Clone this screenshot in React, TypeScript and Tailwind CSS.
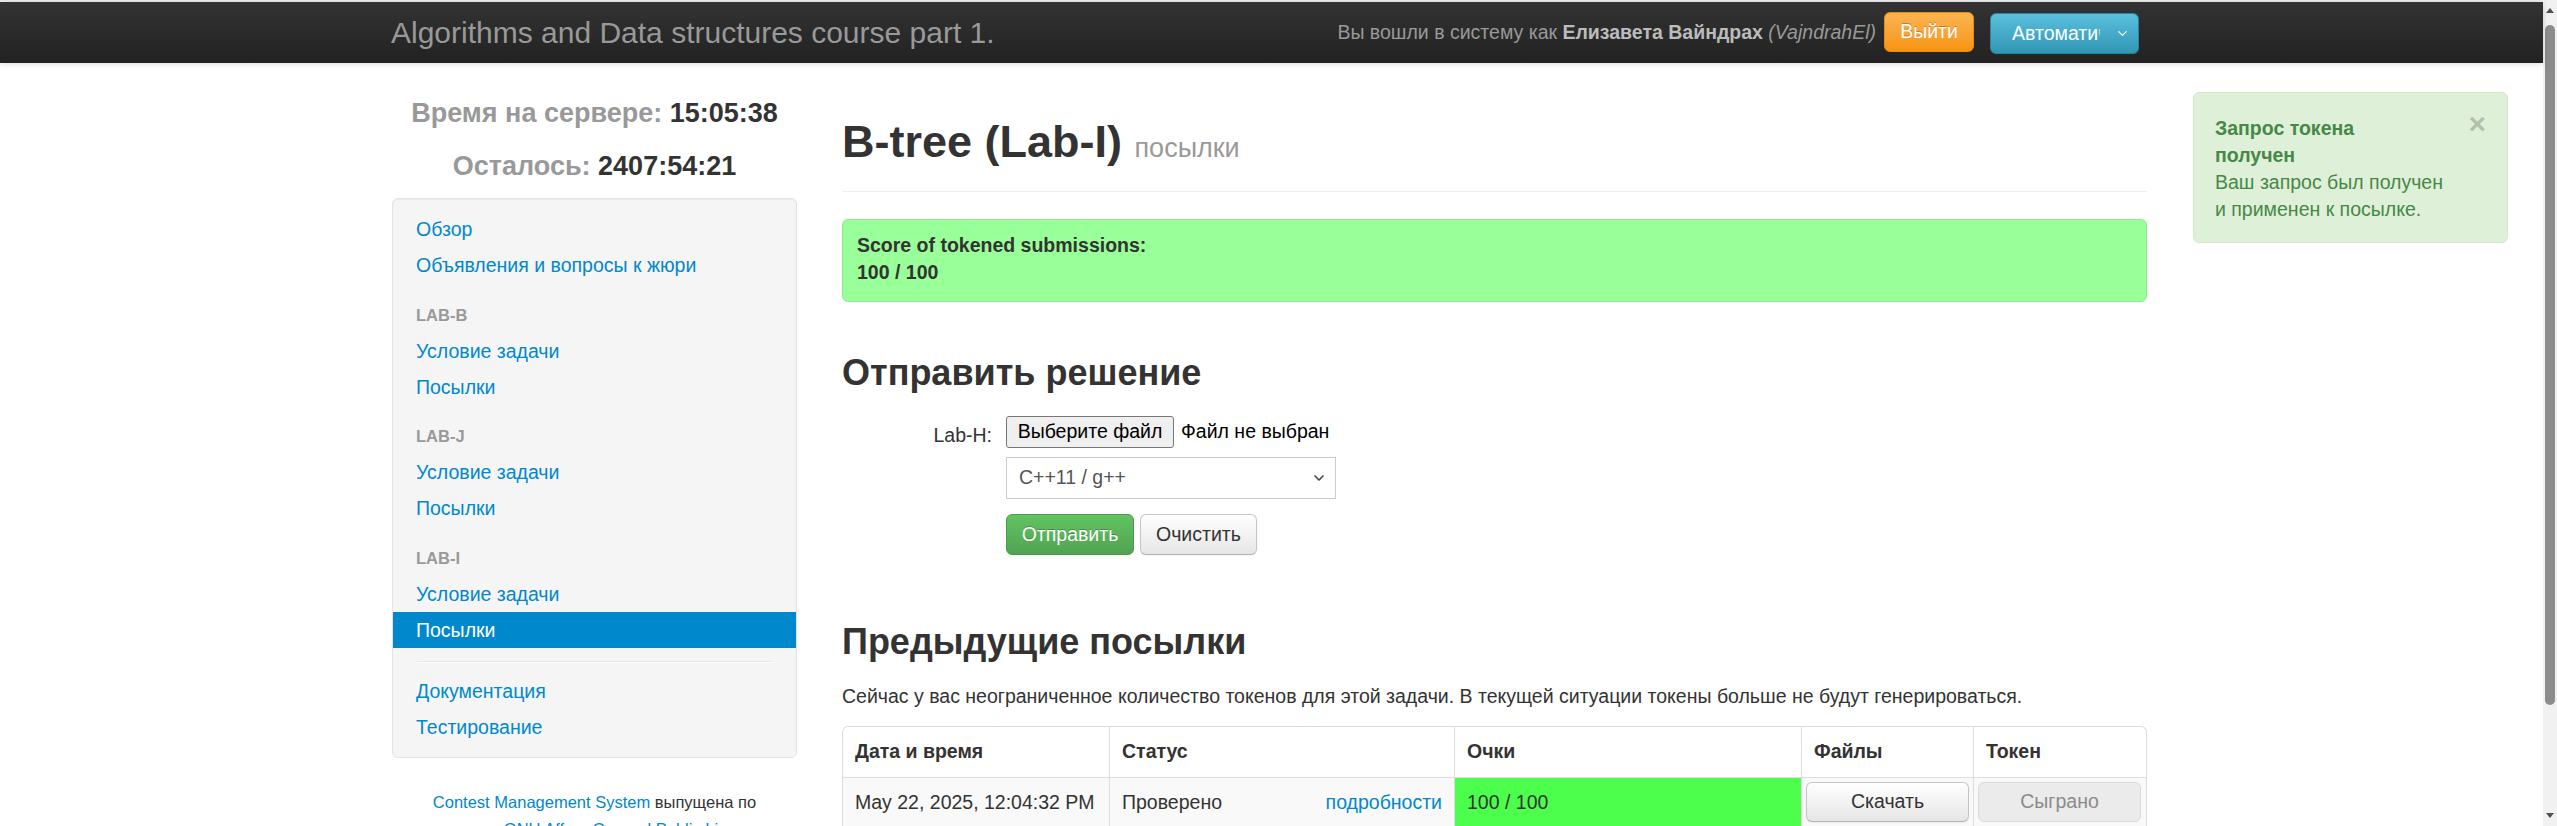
import React from "react";
import { ChevronDown } from "lucide-react";

const navLink = "block px-[23px] py-[3px] leading-[30px] text-[19.5px] text-[#0088cc]";
const navHeader = "mt-[13.5px] px-[23px] py-[3px] leading-[30px] text-[16.5px] font-bold uppercase text-[#999]";

const Sidebar = () => (
  <aside className="w-[405px] shrink-0 pt-[30px]">
    <div className="flex flex-col gap-[13px] text-center text-[27px] font-bold leading-[40px] text-[#333]">
      <div>
        <span className="text-[#999]">Время на сервере:</span> 15:05:38
      </div>
      <div>
        <span className="text-[#999]">Осталось:</span> 2407:54:21
      </div>
    </div>

    <div className="mt-[12px] rounded-[6px] border border-[#e3e3e3] bg-[#f5f5f5] py-[12px] shadow-[inset_0_1px_1px_rgba(0,0,0,0.05)]">
      <a className={navLink}>Обзор</a>
      <a className={navLink}>Объявления и вопросы к жюри</a>

      <div className={navHeader}>Lab-B</div>
      <a className={navLink}>Условие задачи</a>
      <a className={navLink}>Посылки</a>

      <div className={navHeader}>Lab-J</div>
      <a className={navLink}>Условие задачи</a>
      <a className={navLink}>Посылки</a>

      <div className={navHeader}>Lab-I</div>
      <a className={navLink}>Условие задачи</a>
      <a className="block bg-[#0088cc] px-[23px] py-[3px] leading-[30px] text-[19.5px] text-white">Посылки</a>

      <div className="mx-[24px] mb-[10px] mt-[13.5px] h-[2px] border-b border-white bg-[#e5e5e5]" />

      <a className={navLink}>Документация</a>
      <a className={navLink}>Тестирование</a>
    </div>

    <p className="mt-[31px] px-[20px] text-center text-[16.5px] leading-[27px] text-[#333]">
      <a className="text-[#0088cc]">Contest Management System</a> выпущена по
      <br />
      лицензии <a className="text-[#0088cc]">GNU Affero General Public License</a>
    </p>
  </aside>
);

const btnDefault =
  "flex items-center justify-center rounded-[6px] border border-[#c5c5c5] border-b-[#b3b3b3] bg-gradient-to-b from-white to-[#e6e6e6] text-[19.5px] text-[#333] shadow-[inset_0_1px_0_rgba(255,255,255,0.2),0_1px_2px_rgba(0,0,0,0.05)]";

const SubmitForm = () => (
  <div className="mt-[22px]">
    <div className="flex items-start">
      <label className="mt-[4px] w-[150px] text-right text-[19.5px] leading-[30px] text-[#333]">Lab-H:</label>
      <div className="ml-[14px] flex items-center gap-[7px]">
        <span className="flex h-[32px] w-[168px] items-center justify-center rounded-[3px] border border-[#767676] bg-[#efefef] text-[19.5px] text-black">
          Выберите файл
        </span>
        <span className="text-[19.5px] text-black">Файл не выбран</span>
      </div>
    </div>
    <div className="ml-[164px] mt-[7px] flex h-[42px] w-[330px] items-center justify-between border border-[#ccc] bg-white pl-[12px] pr-[8px] text-[19.5px] text-[#555]">
      <span>C++11 / g++</span>
      <ChevronDown size={16} strokeWidth={2.5} className="text-[#444]" />
    </div>
    <div className="ml-[164px] mt-[15px] flex gap-[6px]">
      <button className="h-[41px] w-[128px] rounded-[6px] border border-[#4b9c4b] bg-gradient-to-b from-[#62c462] to-[#51a351] text-[19.5px] text-white [text-shadow:0_-1px_0_rgba(0,0,0,0.25)]">
        Отправить
      </button>
      <button className={`${btnDefault} h-[41px] w-[117px]`}>Очистить</button>
    </div>
  </div>
);

const th = "flex h-[51px] items-center border-b border-[#ddd] px-[12px] font-bold";
const td = "flex h-[49px] items-center px-[12px]";

const SubmissionsTable = () => (
  <div className="mt-[15px] overflow-hidden rounded-t-[6px] border border-b-0 border-[#ddd] text-[19.5px] text-[#333]">
    <div className="grid grid-cols-[266px_345px_347px_172px_173px]">
      <div className={th}>Дата и время</div>
      <div className={`${th} border-l`}>Статус</div>
      <div className={`${th} border-l`}>Очки</div>
      <div className={`${th} border-l`}>Файлы</div>
      <div className={`${th} border-l`}>Токен</div>

      <div className={`${td} bg-[#f9f9f9]`}>May 22, 2025, 12:04:32 PM</div>
      <div className={`${td} justify-between border-l border-[#ddd] bg-[#f9f9f9]`}>
        <span>Проверено</span>
        <a className="text-[#0088cc]">подробности</a>
      </div>
      <div className={`${td} border-l border-[#ddd] bg-[#4cff4c]`}>100 / 100</div>
      <div className="flex h-[49px] items-start border-l border-[#ddd] bg-[#f9f9f9] pl-[4px] pr-[4px] pt-[4px]">
        <button className={`${btnDefault} h-[40px] w-full`}>Скачать</button>
      </div>
      <div className="flex h-[49px] items-start border-l border-[#ddd] bg-[#f9f9f9] pl-[4px] pr-[5px] pt-[4px]">
        <button className="flex h-[40px] w-full items-center justify-center rounded-[6px] border border-[#dadada] bg-[#ebebeb] text-[19.5px] text-[#8a8a8a]">
          Сыграно
        </button>
      </div>
    </div>
  </div>
);

const Navbar = () => (
  <div className="h-[61px] bg-gradient-to-b from-[#333] to-[#222] shadow-[0_1px_6px_rgba(0,0,0,0.15)]">
    <div className="ml-[392px] flex h-full w-[1755px] items-center justify-between pr-[8px]">
      <span className="-ml-px text-[30px] text-[#999]">Algorithms and Data structures course part 1.</span>
      <div className="flex items-center">
        <span className="text-[19.5px] text-[#999]">
          Вы вошли в систему как <b className="text-[#bbb]">Елизавета Вайндрах</b> <i>(VajndrahEl)</i>
        </span>
        <button className="ml-[8px] -mt-[2px] h-[40px] w-[90px] rounded-[6px] border border-[#e38d13] bg-gradient-to-b from-[#fbb450] to-[#f89406] text-[19.5px] text-white [text-shadow:0_-1px_0_rgba(0,0,0,0.25)]">
          Выйти
        </button>
        <div className="ml-[16px] mt-[2px] flex h-[41px] w-[149px] items-center rounded-[6px] border border-[#2a85a0] bg-gradient-to-b from-[#5bc0de] to-[#2f96b4] pl-[21px] pr-[8px] text-[19.5px] text-white">
          <span className="w-[88px] overflow-hidden whitespace-nowrap">Автоматический</span>
          <ChevronDown size={15} strokeWidth={2} className="ml-auto" />
        </div>
      </div>
    </div>
  </div>
);

const Scrollbar = () => (
  <div className="flex w-[14px] shrink-0 flex-col items-center bg-[#f1f1f1]">
    <div className="mt-[8px] h-0 w-0 border-x-[4px] border-b-[5px] border-x-transparent border-b-[#505050]" />
    <div className="mt-[12px] h-[680px] w-[10px] rounded-[5px] bg-[#8c8c8c]" />
    <div className="mt-auto mb-[8px] h-0 w-0 border-x-[4px] border-t-[5px] border-x-transparent border-t-[#505050]" />
  </div>
);

export default function App() {
  return (
    <div className="flex h-screen overflow-hidden bg-white font-['Liberation_Sans',Arial,sans-serif] text-[#333]">
      <div className="relative min-w-0 flex-1">
        <div className="h-[2px] bg-[#ececec]" />
        <Navbar />

        <div className="ml-[392px] flex w-[1755px] gap-[45px]">
          <Sidebar />

          <main className="w-[1305px] pt-[52px]">
            <div className="border-b border-[#eee] pb-[16px]">
              <h1 className="text-[45px] font-bold leading-[54px] text-[#333]">
                B-tree (Lab-I) <small className="text-[27px] font-normal text-[#999]">посылки</small>
              </h1>
            </div>

            <div className="mt-[27px] rounded-[6px] border border-[#8ee88e] bg-[#99ff99] pb-[15px] pl-[14px] pt-[12px] text-[19.5px] font-bold leading-[27px] text-[#333]">
              <div>Score of tokened submissions:</div>
              <div>100 / 100</div>
            </div>

            <h2 className="mt-[50px] text-[36px] font-bold leading-[42px]">Отправить решение</h2>
            <SubmitForm />

            <h2 className="mt-[66px] text-[36px] font-bold leading-[42px]">Предыдущие посылки</h2>
            <p className="mt-[18px] text-[19.5px] leading-[30px]">
              Сейчас у вас неограниченное количество токенов для этой задачи. В текущей ситуации токены больше не будут генерироваться.
            </p>
            <SubmissionsTable />
          </main>
        </div>

        <div className="absolute left-[2193px] top-[92px] h-[151px] w-[315px] rounded-[6px] border border-[#d6e9c6] bg-[#dff0d8] pl-[21px] pt-[22px] text-[19.5px] leading-[27px] text-[#468847]">
          <div className="w-[233px]">
            <b className="block w-[190px]">Запрос токена получен</b>
            <div>Ваш запрос был получен и применен к посылке.</div>
          </div>
          <span className="absolute right-[21px] top-[16px] text-[30px] font-bold leading-none text-black opacity-20">×</span>
        </div>
      </div>
      <Scrollbar />
    </div>
  );
}
